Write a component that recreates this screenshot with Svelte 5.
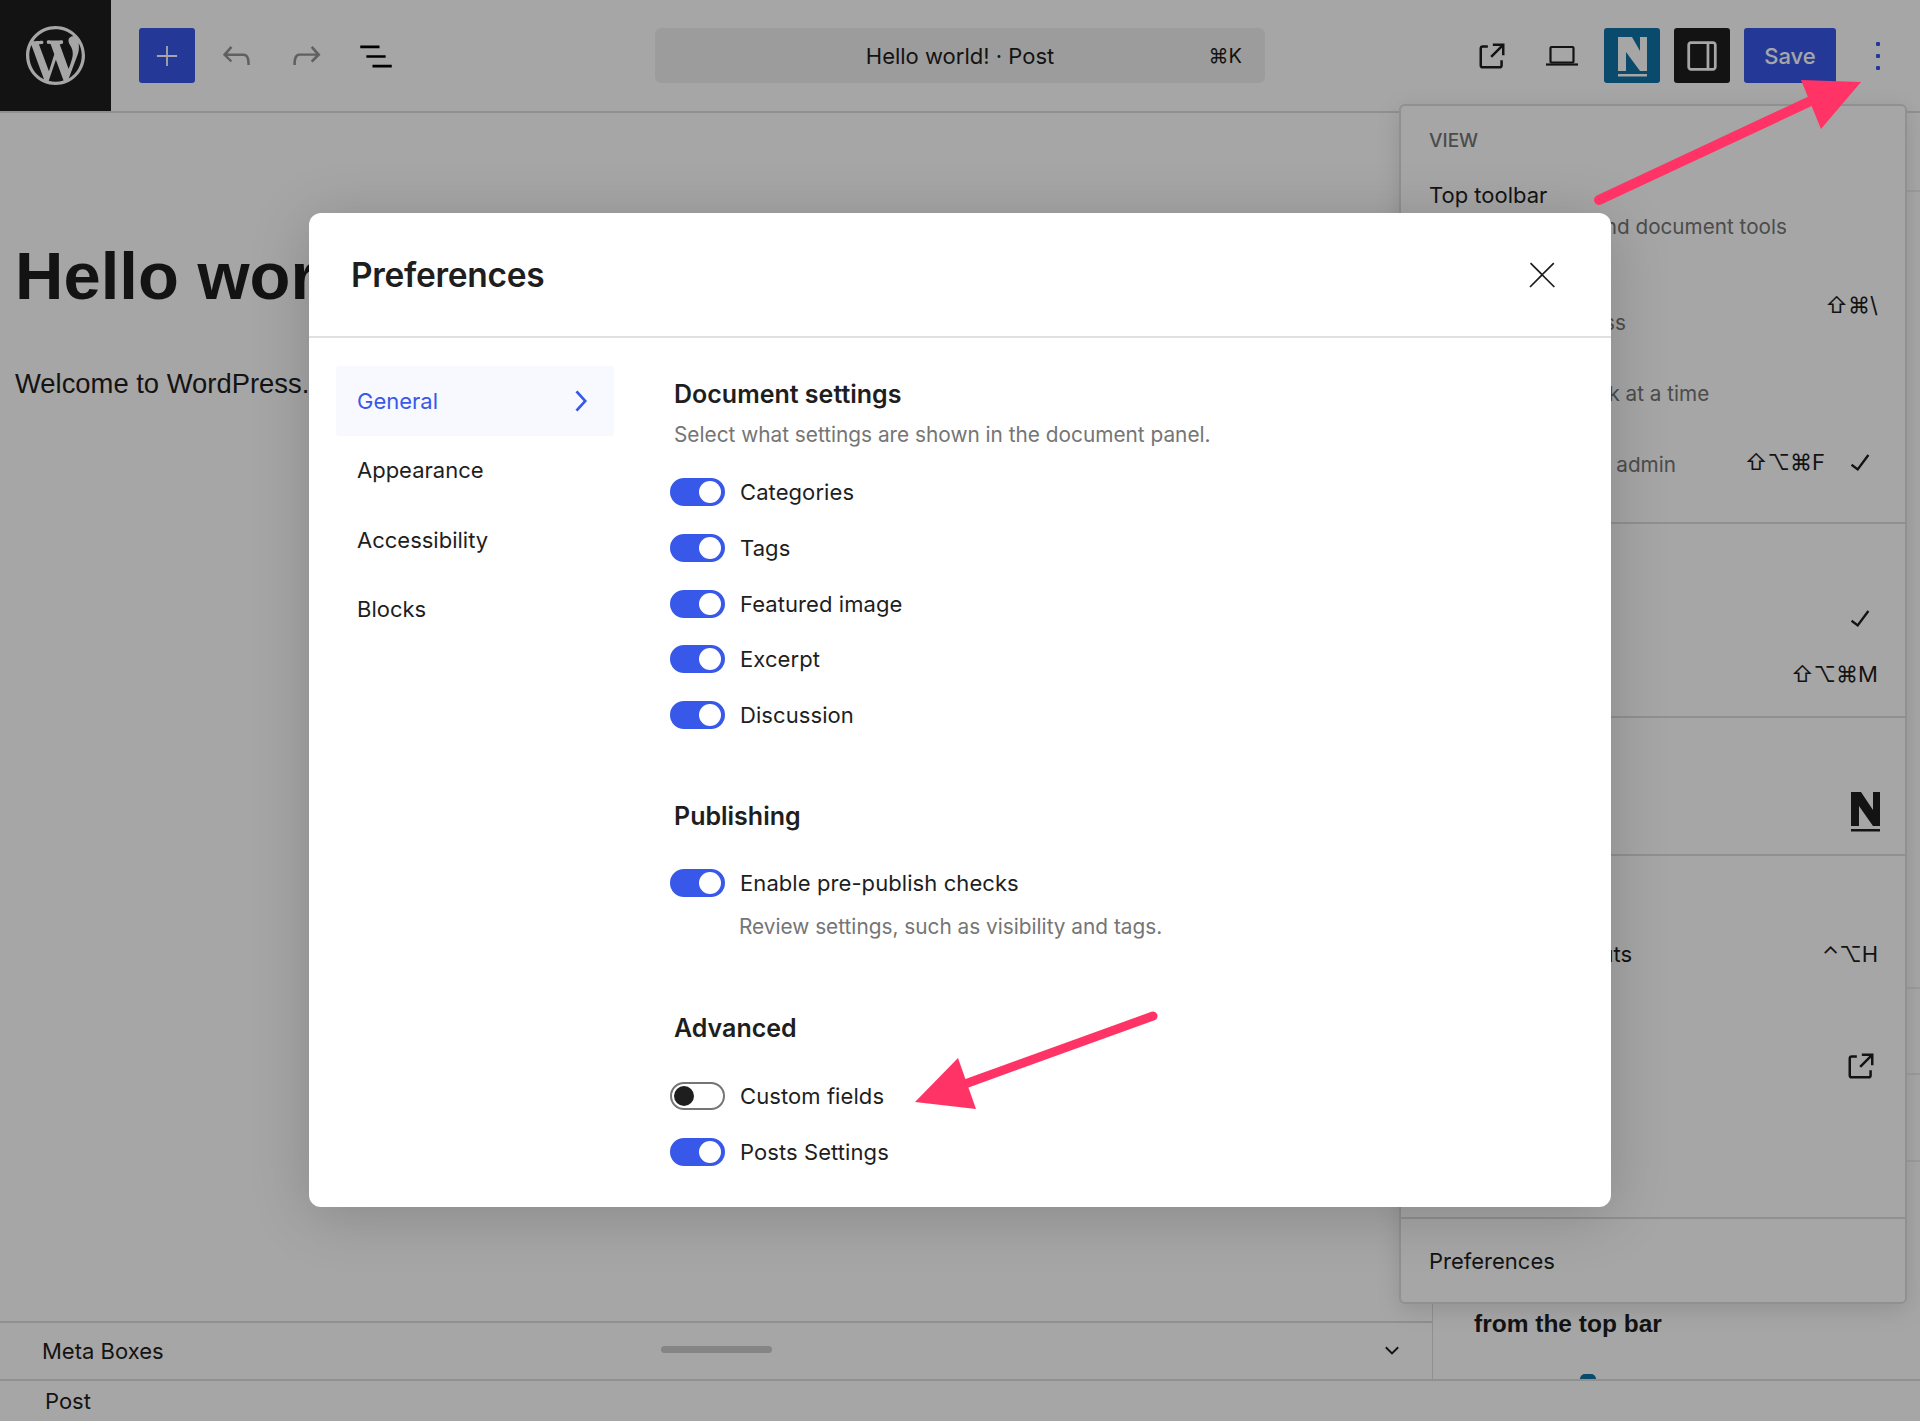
<script>
  const documentToggles = ['Categories', 'Tags', 'Featured image', 'Excerpt', 'Discussion'];
  const externalPath = 'M19.5 4.5h-7V6h4.44l-5.97 5.97 1.06 1.06L18 7.06v4.44h1.5v-7Zm-13 1a2 2 0 0 0-2 2v10a2 2 0 0 0 2 2h10a2 2 0 0 0 2-2v-3H17v3a.5.5 0 0 1-.5.5h-10a.5.5 0 0 1-.5-.5v-10a.5.5 0 0 1 .5-.5h3V5.5h-3Z';
  const checkPath = 'M16.7 7.1l-6.3 8.5-3.3-2.5-.9 1.2 4.5 3.4L17.9 8z';
</script>

<div class="page">
  <header class="topbar">
    <div class="logo">
      <svg viewBox="0 0 20 20" width="59" height="59" fill="#fff"><path d="M20 10c0-5.51-4.49-10-10-10C4.48 0 0 4.49 0 10c0 5.52 4.48 10 10 10 5.51 0 10-4.48 10-10zM7.78 15.37L4.37 6.22c.55-.02 1.17-.08 1.17-.08.5-.06.44-1.13-.06-1.11 0 0-1.45.11-2.37.11-.18 0-.37 0-.58-.01C4.12 2.69 6.87 1.11 10 1.11c2.33 0 4.45.87 6.05 2.34-.68-.11-1.65.39-1.65 1.58 0 .74.45 1.36.9 2.1.35.61.55 1.36.55 2.46 0 1.49-1.4 5-1.4 5l-3.03-8.37c.54-.02.82-.17.82-.17.5-.05.44-1.25-.06-1.22 0 0-1.44.12-2.38.12-.87 0-2.33-.12-2.33-.12-.5-.03-.56 1.2-.06 1.22l.92.08 1.26 3.41zM17.41 10c.24-.64.74-1.87.43-4.25.7 1.29 1.05 2.71 1.05 4.25 0 3.29-1.73 6.24-4.4 7.78.97-2.59 1.94-5.2 2.92-7.78zM6.1 18.09C3.12 16.65 1.11 13.53 1.11 10c0-1.3.23-2.48.72-3.59C3.25 10.3 4.67 14.2 6.1 18.09zm4.03-6.63l2.58 6.98c-.86.29-1.76.45-2.71.45-.79 0-1.57-.11-2.29-.33.81-2.38 1.62-4.74 2.42-7.1z"/></svg>
    </div>
    <div class="tools-left">
      <button class="tb plus"><svg viewBox="0 0 24 24" width="44" height="44" fill="#fff"><path d="M11.500 12.500V17.500H12.500V12.500H17.500V11.500H12.500V6.500H11.500V11.500H6.500V12.500H11.500Z"/></svg></button>
      <button class="tb ghost"><svg viewBox="0 0 24 24" width="41" height="41" fill="#949494"><path d="M18.3 11.7c-.6-.6-1.4-.9-2.3-.9H6.7l2.9-3.3-1.1-1-4.5 5L8.5 16l1-1-2.7-2.7H16c.5 0 .9.2 1.3.5 1 1 1 3.4 1 4.5v.3h1.5v-.2c0-1.5 0-4.3-1.5-5.7z"/></svg></button>
      <button class="tb ghost"><svg viewBox="0 0 24 24" width="41" height="41" fill="#949494"><path d="M15.6 6.5l-1.1 1 2.9 3.3H8c-.9 0-1.7.3-2.3.9-1.4 1.5-1.4 4.2-1.4 5.6v.2h1.5v-.3c0-1.1 0-3.5 1-4.5.3-.3.7-.5 1.3-.5h9.2L14.5 15l1.1 1.1 4.6-4.6-4.6-5z"/></svg></button>
      <button class="tb ghost"><svg viewBox="0 0 24 24" width="42" height="42" fill="#000"><path d="M3 6h11v1.5H3V6zm3.5 5.5h11V13h-11v-1.5zM21 17H10v1.5h11V17z"/></svg></button>
    </div>
    <div class="command">
      <span class="doc-title">Hello world! · Post</span>
      <span class="doc-key">⌘K</span>
    </div>
    <div class="tools-right">
      <button class="tb ghost"><svg viewBox="0 0 24 24" width="40" height="40" fill="#1e1e1e"><path d={externalPath}/></svg></button>
      <button class="tb ghost"><svg viewBox="0 0 34 34" width="34" height="34" fill="none" stroke="#1e1e1e" stroke-width="2.2"><rect x="5.5" y="8" width="23" height="15.5" rx="1"/><path d="M1 25.500h32"/></svg></button>
      <button class="tb n-btn">
        <svg viewBox="0 0 29 40" width="29" height="40" fill="#fff"><path d="M0 0h14l8 14V0h7v34h-7L8 15v19H0z"/><path d="M0 37h29v2.500H0z"/></svg>
      </button>
      <button class="tb dark"><svg viewBox="0 0 24 24" width="44" height="44" fill="#fff"><path d="M18 4H6c-1.100 0-2 .9-2 2v12c0 1.100.9 2 2 2h12c1.100 0 2-.9 2-2V6c0-1.100-.9-2-2-2zm-3.500 14.500H6c-.3 0-.5-.2-.5-.5V6c0-.3.2-.5.5-.5h8.500v13zm4-.5c0 .3-.2.500-.5.500h-2V5.500h2c.3 0 .5.200.5.500v12z"/></svg></button>
      <button class="tb save">Save</button>
      <button class="tb kebab" aria-label="Options"><i></i><i></i><i></i></button>
    </div>
  </header>

  <div class="main">
    <div class="canvas-col">
      <div class="canvas">
        <h1>Hello world!</h1>
        <p>Welcome to WordPress. This is your first post.</p>
      </div>
      <div class="meta">
        <span>Meta Boxes</span>
        <span class="handle"></span>
        <svg viewBox="0 0 24 24" width="30" height="30" fill="#1e1e1e"><path d="M17.500 9.500 12 15 6.500 9.500l1.100-1.100 4.400 4.400 4.400-4.400z"/></svg>
      </div>
    </div>
    <aside class="sidebar">
      <div class="side-sec s1"></div>
      <div class="side-sec s2"></div>
      <div class="side-sec s3"></div>
      <div class="side-sec s4"></div>
      <div class="side-last">
        <strong>from the top bar</strong>
        <span class="blue-tab"></span>
      </div>
    </aside>
  </div>

  <footer class="status">Post</footer>

  <div class="menu">
    <section class="group first">
      <div class="group-label">VIEW</div>
      <div class="item"><div class="item-text"><div class="ttl">Top toolbar</div><div class="dsc">Access all block and document tools in a single place</div></div></div>
      <div class="item"><div class="item-text"><div class="ttl">Distraction free</div><div class="dsc">Write with calmness</div></div><span class="keys">⇧⌘\</span></div>
      <div class="item"><div class="item-text"><div class="ttl">Spotlight mode</div><div class="dsc">Focus on one block at a time</div></div></div>
      <div class="item"><div class="item-text narrow"><div class="ttl">Fullscreen mode</div><div class="dsc">Show and hide the admin UI</div></div><span class="keys with-check">⇧⌥⌘F</span><svg class="check" viewBox="0 0 24 24" width="38" height="38" fill="#1e1e1e"><path d={checkPath}/></svg></div>
    </section>
    <section class="group">
      <div class="group-label">EDITOR</div>
      <div class="row"><span class="ttl">Visual editor</span><svg class="check" viewBox="0 0 24 24" width="38" height="38" fill="#1e1e1e"><path d={checkPath}/></svg></div>
      <div class="row"><span class="ttl">Code editor</span><span class="keys">⇧⌥⌘M</span></div>
    </section>
    <section class="group">
      <div class="group-label">PLUGINS</div>
      <div class="row"><span class="ttl">Newsletter</span><svg class="n-small" viewBox="0 0 29 40" width="29" height="40" fill="#1e1e1e"><path d="M0 0h10l12 18V0h7v34h-7L8 14v20H0z"/><path d="M0 37h29v2.500H0z"/></svg></div>
    </section>
    <section class="group tools">
      <div class="group-label">TOOLS</div>
      <div class="row"><span class="ttl">Keyboard shortcuts</span><span class="keys">⌃⌥H</span></div>
      <div class="row"><span class="ttl">Welcome Guide</span></div>
      <div class="row"><span class="ttl">Help</span><svg class="ext" viewBox="0 0 24 24" width="40" height="40" fill="#1e1e1e"><path d={externalPath}/></svg></div>
      <div class="row"><span class="ttl">Copy all blocks</span></div>
      <div class="row"><span class="ttl">Manage patterns</span></div>
    </section>
    <section class="group last">
      <div class="row"><span class="ttl">Preferences</span></div>
    </section>
  </div>

  <div class="scrim"></div>

  <div class="modal">
    <div class="modal-head">
      <h2>Preferences</h2>
      <svg viewBox="0 0 24 24" width="42" height="42" fill="#1e1e1e"><path d="M12.700 11.800l6.400-6.300-.7-.7-6.300 6.300-6.300-6.300-.7.7 6.300 6.300-6.600 6.700.7.700 6.600-6.700 6.600 6.700.7-.7z"/></svg>
    </div>
    <div class="modal-body">
      <nav class="nav">
        <div class="nav-item active">General
          <svg viewBox="0 0 24 24" width="42" height="42" fill="#3858e9"><path d="M10.600 6 9.400 7l4.600 5-4.600 5 1.200 1 5.400-6z"/></svg>
        </div>
        <div class="nav-item">Appearance</div>
        <div class="nav-item">Accessibility</div>
        <div class="nav-item">Blocks</div>
      </nav>
      <div class="content">
        <section class="pref doc">
          <h3>Document settings</h3>
          <p class="sub">Select what settings are shown in the document panel.</p>
          {#each documentToggles as t}
            <div class="tog-row"><span class="toggle on"><i></i></span>{t}</div>
          {/each}
        </section>
        <section class="pref pub">
          <h3>Publishing</h3>
          <div class="tog-row"><span class="toggle on"><i></i></span>Enable pre-publish checks</div>
          <p class="help">Review settings, such as visibility and tags.</p>
        </section>
        <section class="pref adv">
          <h3>Advanced</h3>
          <div class="tog-row"><span class="toggle"><i></i></span>Custom fields</div>
          <div class="tog-row"><span class="toggle on"><i></i></span>Posts Settings</div>
        </section>
      </div>
    </div>
  </div>

  <svg class="arrows" viewBox="0 0 1920 1421" width="1920" height="1421">
    <path d="M1599 200 L1815 99" stroke="#ff3366" stroke-width="10" stroke-linecap="round" fill="none"/>
    <path d="M1801 80 L1861 82 L1821 129 Z" fill="#ff3366"/>
    <path d="M1153 1016 L965 1084" stroke="#ff3366" stroke-width="9" stroke-linecap="round" fill="none"/>
    <path d="M915 1102 L958 1058 L976 1109 Z" fill="#ff3366"/>
  </svg>
</div>

<style>
  :global(body) { margin: 0; background: #fff; }
  .page {
    position: relative;
    width: 1920px;
    height: 1421px;
    overflow: hidden;
    display: flex;
    flex-direction: column;
    background: #fff;
    color: #1e1e1e;
    font-family: Inter, "DejaVu Sans", "Liberation Sans", sans-serif;
    font-size: 22px;
  }
  .topbar {
    height: 111px;
    flex: none;
    display: flex;
    align-items: center;
    border-bottom: 2px solid #ddd;
    position: relative;
  }
  button { border: 0; padding: 0; background: none; font: inherit; color: inherit; display: flex; align-items: center; justify-content: center; }
  .logo { width: 111px; height: 111px; background: #1e1e1e; display: flex; align-items: center; justify-content: center; flex: none; }
  .tools-left { display: flex; align-items: center; margin-left: 28px; flex: none; }
  .tb { height: 55px; }
  .plus { width: 56px; background: #3858e9; border-radius: 3px; margin-right: 13px; }
  .ghost { width: 56px; }
  .tools-left .ghost + .ghost { margin-left: 14px; }
  .command {
    width: 610px;
    height: 55px;
    flex: none;
    box-sizing: border-box;
    margin-left: 251px;
    background: #f0f0f0;
    border-radius: 6px;
    display: flex;
    align-items: center;
    justify-content: center;
    position: relative;
  }
  .doc-key { position: absolute; right: 23px; font-size: 20px; }
  .tools-right { display: flex; align-items: center; margin-left: auto; flex: none; }
  .tools-right .ghost { width: 56px; margin-right: 14px; }
  .n-btn { width: 56px; background: #0f72a8; border-radius: 3px; margin-right: 14px; padding-top: 2px; }
  .dark { width: 56px; background: #1e1e1e; border-radius: 3px; margin-right: 14px; }
  .save { width: 92px; background: #3858e9; color: #fff; border-radius: 3px; font-weight: 500; }
  .kebab { width: 84px; flex-direction: column; gap: 8px; }
  .kebab i { width: 4px; height: 4px; background: #3858e9; border-radius: 1px; display: block; }

  .main { flex: 1; display: flex; min-height: 0; }
  .canvas-col { flex: 1; display: flex; flex-direction: column; min-width: 0; }
  .canvas { flex: 1; padding: 0 15px; font-family: "Liberation Sans", Arial, sans-serif; }
  h1 { margin: 0; padding-top: 125px; font-size: 67px; line-height: 76px; font-weight: 700; white-space: nowrap; }
  p { margin: 0; }
  .canvas p { margin-top: 53px; font-size: 27.4px; line-height: 34px; white-space: nowrap; }
  .meta {
    height: 56px;
    flex: none;
    border-top: 2px solid #ddd;
    display: flex;
    align-items: center;
    justify-content: space-between;
    padding: 0 25px 0 42px;
    position: relative;
  }
  .handle { position: absolute; left: 661px; top: 23px; width: 111px; height: 7px; border-radius: 4px; background: #ccc; }
  .sidebar { width: 487px; flex: none; border-left: 1px solid #ddd; display: flex; flex-direction: column; }
  .side-sec { border-bottom: 2px solid #eee; box-sizing: border-box; flex: none; }
  .s1 { height: 79px; }
  .s2 { height: 797px; }
  .s3 { height: 86px; }
  .s4 { height: 87px; }
  .side-last { flex: 1; padding: 0 0 0 41px; overflow: hidden; }
  .side-last strong { display: block; margin-top: 147px; font-weight: 700; font-size: 24.5px; line-height: 30px; font-family: "Liberation Sans", Arial, sans-serif; }
  .blue-tab { display: block; width: 16px; height: 30px; background: #0f72a8; border-radius: 5px; margin: 35px 0 0 106px; }
  .status { height: 42px; flex: none; box-sizing: border-box; border-top: 2px solid #ddd; padding: 7px 45px 0; line-height: 26px; }

  .menu {
    position: absolute;
    left: 1399px;
    top: 104px;
    width: 508px;
    box-sizing: border-box;
    height: 1200px;
    background: #fff;
    border: 2px solid #ddd;
    border-radius: 6px;
    box-shadow: 0 6px 24px rgba(0,0,0,.12);
  }
  .group { padding: 21px 28px 14px; border-bottom: 2px solid #ddd; }
  .group.first { padding-top: 22px; padding-bottom: 13px; }
  .group.last { border-bottom: 0; padding-top: 14px; }
  .group-label { height: 25px; line-height: 25px; color: #757575; font-size: 19px; font-weight: 500; margin-bottom: 20px; }
  .first .group-label { margin-bottom: 22px; }
  .tools .group-label { margin-bottom: 24px; }
  .tools { padding-bottom: 11px; }
  .item { display: flex; align-items: center; padding: 5px 0 7.5px; }
  .item-text { width: 370px; flex: none; }
  .item-text.narrow { width: 260px; }
  .ttl { line-height: 30px; }
  .dsc { margin-top: 3.5px; line-height: 25px; color: #757575; font-size: 20.7px; }
  .row { height: 56px; display: flex; align-items: center; justify-content: space-between; }
  .keys { margin-left: auto; white-space: nowrap; margin-right: -1px; }
  .keys.with-check { margin-right: 16px; margin-top: 5px; }
  .item .check { margin: 4px -2px 0 0; flex: none; }
  .row .check { margin-right: -2px; }
  .n-small { margin-right: -3px; }
  .ext { margin-right: -4px; }

  .scrim { position: absolute; inset: 0; background: rgba(0,0,0,.35); }

  .modal {
    position: absolute;
    left: 309px;
    top: 213px;
    width: 1302px;
    height: 994px;
    background: #fff;
    border-radius: 12px;
    box-shadow: 0 8px 60px rgba(0,0,0,.18);
    overflow: hidden;
  }
  .modal-head {
    height: 125px;
    box-sizing: border-box;
    border-bottom: 2px solid #e0e0e0;
    display: flex;
    align-items: center;
    justify-content: space-between;
    padding: 0 48px 0 42px;
  }
  h2 { margin: 0; font-size: 33.5px; font-weight: 600; letter-spacing: -0.3px; }
  .modal-body { display: flex; }
  .nav { width: 278px; flex: none; margin: 28px 0 0 27px; }
  .nav-item { height: 69.5px; display: flex; align-items: center; justify-content: space-between; padding: 0 13px 0 21px; border-radius: 3px; }
  .nav-item.active { color: #3858e9; background: #f8f8ff; }
  .content { margin-left: 56px; flex: 1; }
  .pref { padding-left: 4px; }
  h3 { margin: 0; font-size: 25px; line-height: 30px; font-weight: 600; }
  .doc { padding-top: 41px; }
  .sub { margin: 13px 0 16.5px; font-size: 20.8px; line-height: 26px; color: #757575; }
  .tog-row { height: 55.7px; display: flex; align-items: center; margin-left: -4px; letter-spacing: 0.08px; }
  .toggle { width: 55px; height: 28px; box-sizing: border-box; border: 2px solid #757575; border-radius: 14px; background: #fff; display: flex; align-items: center; margin-right: 15px; flex: none; padding: 0 2px; }
  .toggle i { width: 20px; height: 20px; border-radius: 50%; background: #1e1e1e; display: block; }
  .toggle.on { background: #3858e9; border-color: #3858e9; justify-content: flex-end; }
  .toggle.on i { background: #fff; width: 22px; height: 22px; }
  .pub { margin-top: 58px; }
  .pub h3 { margin-bottom: 24.7px; }
  .help { margin: 3px 0 0 65px; font-size: 20.8px; line-height: 26px; color: #757575; }
  .adv { margin-top: 73px; }
  .adv h3 { margin-bottom: 24.8px; }

  .arrows { position: absolute; left: 0; top: 0; pointer-events: none; }
</style>
